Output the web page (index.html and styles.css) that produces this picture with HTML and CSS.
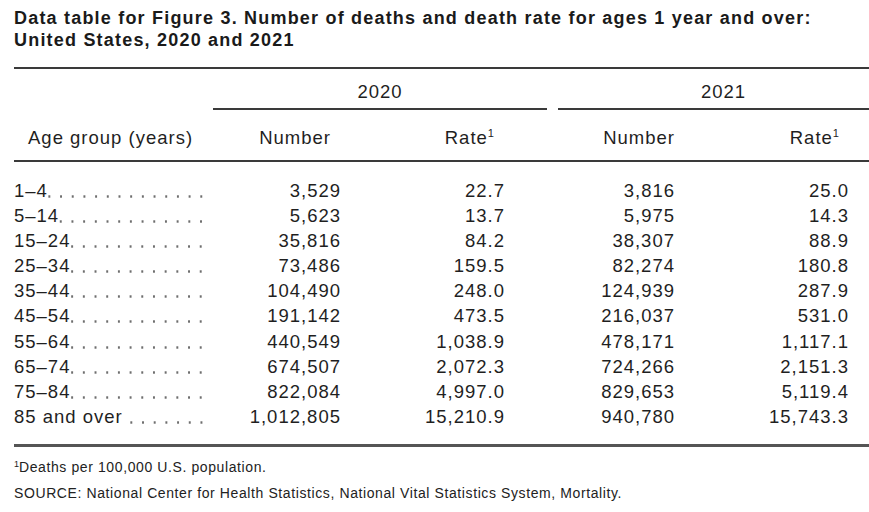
FILE: index.html
```html
<!DOCTYPE html>
<html lang="en">
<head>
<meta charset="utf-8">
<title>Data table for Figure 3</title>
<link rel="stylesheet" href="styles.css">
</head>
<body>
<div class="page">
  <h1 class="title">Data table for Figure 3. Number of deaths and death rate for ages 1 year and over:<br>United States, 2020 and 2021</h1>
  <div class="table">
    <div class="row years">
      <div class="year y2020">2020</div>
      <div class="year y2021">2021</div>
    </div>
    <div class="row head">
      <div class="c1 agehead">Age group (years)</div>
      <div class="c2 h-num20">Number</div>
      <div class="c3 h-rate20">Rate<sup>1</sup></div>
      <div class="c4 h-num21">Number</div>
      <div class="c5 h-rate21">Rate<sup>1</sup></div>
    </div>
    <div class="body">
      <div class="row data"><div class="c1 label"><span>1–4</span><span class="leader"></span></div><div class="c2">3,529</div><div class="c3">22.7</div><div class="c4">3,816</div><div class="c5">25.0</div></div>
      <div class="row data"><div class="c1 label"><span>5–14</span><span class="leader"></span></div><div class="c2">5,623</div><div class="c3">13.7</div><div class="c4">5,975</div><div class="c5">14.3</div></div>
      <div class="row data"><div class="c1 label"><span>15–24</span><span class="leader"></span></div><div class="c2">35,816</div><div class="c3">84.2</div><div class="c4">38,307</div><div class="c5">88.9</div></div>
      <div class="row data"><div class="c1 label"><span>25–34</span><span class="leader"></span></div><div class="c2">73,486</div><div class="c3">159.5</div><div class="c4">82,274</div><div class="c5">180.8</div></div>
      <div class="row data"><div class="c1 label"><span>35–44</span><span class="leader"></span></div><div class="c2">104,490</div><div class="c3">248.0</div><div class="c4">124,939</div><div class="c5">287.9</div></div>
      <div class="row data"><div class="c1 label"><span>45–54</span><span class="leader"></span></div><div class="c2">191,142</div><div class="c3">473.5</div><div class="c4">216,037</div><div class="c5">531.0</div></div>
      <div class="row data"><div class="c1 label"><span>55–64</span><span class="leader"></span></div><div class="c2">440,549</div><div class="c3">1,038.9</div><div class="c4">478,171</div><div class="c5">1,117.1</div></div>
      <div class="row data"><div class="c1 label"><span>65–74</span><span class="leader"></span></div><div class="c2">674,507</div><div class="c3">2,072.3</div><div class="c4">724,266</div><div class="c5">2,151.3</div></div>
      <div class="row data"><div class="c1 label"><span>75–84</span><span class="leader"></span></div><div class="c2">822,084</div><div class="c3">4,997.0</div><div class="c4">829,653</div><div class="c5">5,119.4</div></div>
      <div class="row data"><div class="c1 label"><span>85 and over</span><span class="leader spaced"></span></div><div class="c2">1,012,805</div><div class="c3">15,210.9</div><div class="c4">940,780</div><div class="c5">15,743.3</div></div>
    </div>
  </div>
  <div class="notes">
    <p class="note"><sup>1</sup>Deaths per 100,000 U.S. population.</p>
    <p class="note">SOURCE: National Center for Health Statistics, National Vital Statistics System, Mortality.</p>
  </div>
</div>
</body>
</html>
```

FILE: styles.css
```css
html, body {
  margin: 0;
  padding: 0;
  background: #ffffff;
}

body {
  font-family: "Liberation Sans", Arial, sans-serif;
  color: #1f1f1f;
}

.page {
  width: 869px;
  height: 512px;
  overflow: hidden;
  padding: 7px 0 0 14px;
  box-sizing: border-box;
}

.title {
  margin: 0;
  font-size: 18px;
  font-weight: bold;
  line-height: 22.4px;
  letter-spacing: 1.2px;
  color: #1a1a1a;
}

.table {
  width: 875px;
  margin-top: 15px;
  border-top: 2px solid #3a3a3a;
  font-size: 18.5px;
  letter-spacing: 1px;
  line-height: 25px;
}

.row {
  display: grid;
  grid-template-columns: 199px 128px 164px 42px 11px 117px 174px 40px;
}

.years {
  padding-top: 10px;
}

.year {
  text-align: center;
  padding-bottom: 4px;
  border-bottom: 2px solid #3a3a3a;
}

.y2020 { grid-column: 2 / 5; }
.y2021 { grid-column: 6 / 9; }

.head {
  padding: 15px 0 10px;
  border-bottom: 2px solid #3a3a3a;
}

.c1 { grid-column: 1; }
.c2 { grid-column: 2; text-align: right; }
.c3 { grid-column: 3; text-align: right; }
.c4 { grid-column: 4 / 7; text-align: right; }
.c5 { grid-column: 7; text-align: right; }

.agehead { padding-left: 14px; }
.h-num20 { padding-right: 10px; }
.h-rate20 { padding-right: 11px; }
.h-num21 { padding-right: 0; }
.h-rate21 { padding-right: 10px; }

sup {
  font-size: 0.6em;
  line-height: 0;
  vertical-align: 0.6em;
  letter-spacing: 0;
}

.body {
  padding: 15.7px 0 14.3px;
  border-bottom: 3px solid #555555;
}

.data {
  height: 25.2px;
}

.label {
  display: flex;
  padding-right: 6px;
  white-space: nowrap;
}

.leader {
  flex: 1;
  background-image: radial-gradient(circle, #6e6e6e 1px, rgba(255,255,255,0) 1.4px);
  background-size: 11.7px 3px;
  background-repeat: repeat-x;
  background-position: right 0 top 17px;
}

.leader.spaced {
  margin-left: 6px;
}

.notes {
  margin-top: 10px;
  font-size: 14px;
  line-height: 20px;
  letter-spacing: 0.6px;
  color: #222222;
}

.note {
  margin: 0 0 6px;
}

.note sup {
  font-size: 9px;
  vertical-align: 5px;
}
```
